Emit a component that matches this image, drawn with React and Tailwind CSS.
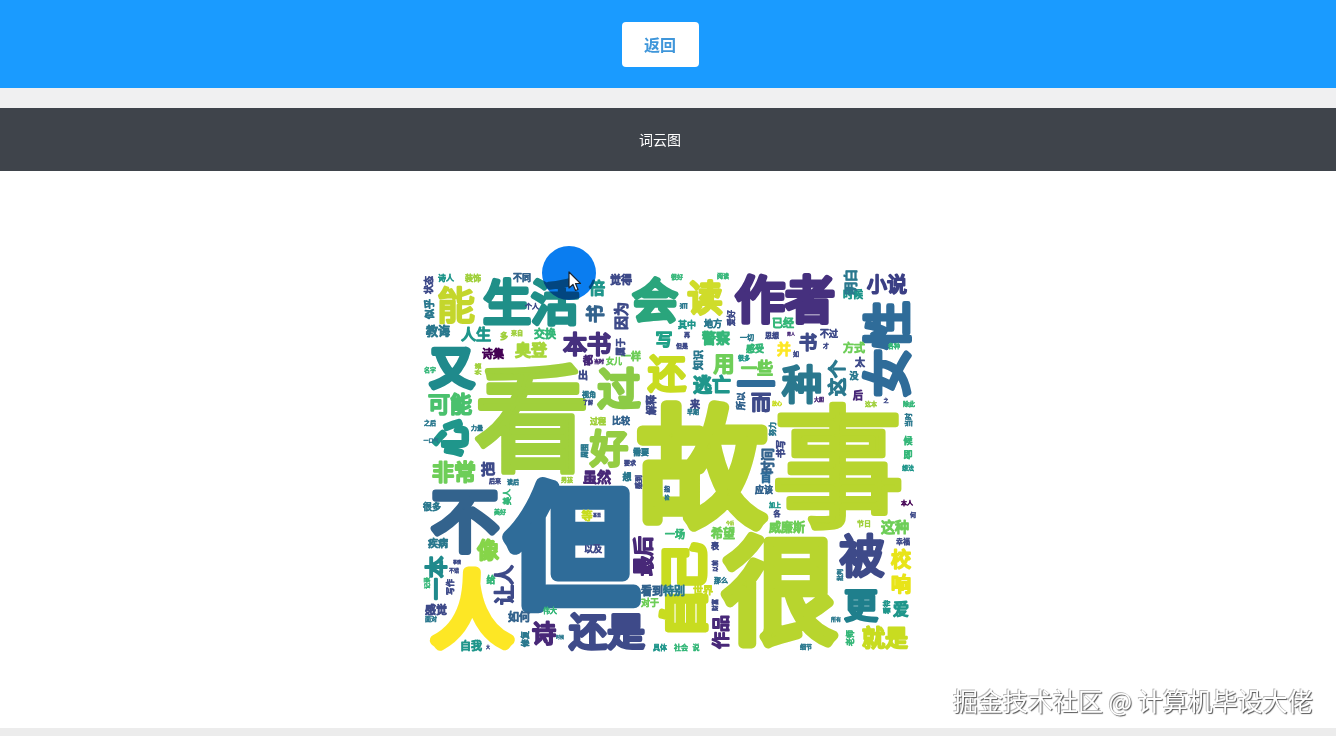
const Y='#fde725',L='#b8d52e',G='#a0d03c',M='#6ece58',E='#35b779',T='#1f968b',C='#1f8a8c',B='#2a788e',S='#2f6c99',I='#3e4a89',P='#482878',D='#440154',K='#c8dc20';
// [text, centre x, centre y, font size, colour, rotated, stroke ratio]
const words=[
['故',702,468,130,L,0,.085],['事',838,468,132,L,0,.05],['看',532,420,116,G,0,.05],['但',572,547,132,S,0,.11],['很',780,592,116,L,0,.08],['不',465,522,68,'#33638d'],['人',472,610,80,Y,0,.14],
['生活',531,303,48,'#1f8f88'],['能',456,305,38,'#c4d62c',0,.07],['会',655,300,46,'#2aa57c'],['读',705,298,35,'#cfdc2a'],['作者',785,300,50,'#46307e'],['小说',887,285,20,'#3b3f85'],['女性',888,349,48,'#2f6c99',1],
['又',452,368,44,C,0,.14],['过',619,390,43,'#8ccb46'],['好',609,448,38,'#95cd42'],['还',667,373,38,K],['一',756,384,38,'#2f6c99'],['种',802,385,40,B,0,.08],['而',761,403,20,I],['一些',757,368,16,M],['逃亡',712,385,19,T],['用',724,363,21,M],
['书',808,343,18,I],['这个',838,378,18,B,1],['并',784,349,14,Y],['方式',854,348,11,M],['太',860,362,10,I],['没',854,376,9,B],['后',858,395,10,P],['已经',783,323,11,E],['不过',829,334,9,I],['时候',853,294,10,T],['明白',850,282,13,B,1],
['其中',687,325,9,T],['地方',713,324,9,B],['警察',716,338,14,E],['写',664,340,17,'#1fa187'],['本书',587,344,24,'#46307e'],['人生',476,335,15,T],['奥登',531,350,16,'#a8d63a'],['诗集',493,354,11,D],['交换',545,334,11,E],['教诲',438,332,12,B],
['可能',450,404,22,'#4ac16d'],['心',451,438,36,'#1f968b',1,.14],['非常',454,472,22,M],['把',488,469,14,I],['虽然',597,477,14,P],['像',488,550,22,'#86d549'],['让人',505,585,20,I,1],['一本',436,578,22,C,1],['还是',607,631,38,I],['诗',544,633,24,P],['如何',519,617,11,'#33638d'],['自我',471,646,11,T],['感觉',436,610,11,I],['很多',432,507,9,B],['疾病',438,543,10,B],
['最后',644,556,20,P,1],['自己',684,590,47,K,1,.13],['更',861,606,34,'#1f7f8c'],['被',862,557,45,I,0,.08],['就是',885,638,23,K],['爱',901,609,16,T],['这种',895,527,14,M],['校',901,560,20,'#e8e419'],['响',901,585,20,'#e8e419'],['希望',723,534,12,M],['威廉斯',787,528,12,M],['一场',675,534,10,E],['特别',674,591,11,B],['世界',703,590,10,K],['作品',721,632,17,P,1],['看到',652,591,11,'#33638d'],['对于',650,603,9,M],
['诗人',446,278,8,T],['装饰',473,278,8,G],['不同',522,278,9,'#33638d'],['觉得',621,280,11,I],['状态',429,285,9,I,1],['似乎',429,309,10,B,1],['倍',597,288,16,T],['书',596,314,18,'#33638d',1],['因为',621,316,14,I,1],['个人',532,306,7,I],['多',504,336,8,G],['来自',517,333,6,G],['都',588,360,10,P],['当时',599,361,5,P],['女儿',614,361,8,M],['一样',631,356,10,M],['属于',621,347,9,I,1],['出',583,375,10,I],['名字',430,370,6,E],['外婆',478,369,6,G,1],['之后',430,423,6,B],['力量',477,428,6,B],['一口气',431,440,5,B],['视角',589,394,7,B],['了解',588,402,5,I],['过程',598,421,8,G],['比较',621,421,9,'#33638d'],['解释',651,405,10,I,1],['需要',641,452,8,B],['周围',584,451,7,B,1],
['很好',677,277,6,E],['阅读',723,276,6,E],['当',683,306,7,B,1],['爱好',731,318,8,I,1],['再',687,335,6,I],['但是',682,346,6,I],['知识',698,360,10,B,1],['一切',747,337,7,B],['思想',772,335,7,I],['感受',755,349,9,E],['很多',744,358,6,T],['男人',791,335,4,P],['如',796,354,6,I],['才',826,346,6,I],['所以',741,401,9,'#33638d',1],['来',695,404,10,I],['早期',693,412,6,B],['放心',777,403,5,K],['大胆',819,399,5,P],['这本',871,404,6,G],['之',886,400,5,I],['除此',909,404,6,E],['各种',894,346,6,E],['当时',908,420,7,B,1],['候',908,441,9,E],['即',908,455,9,E],['想法',908,468,6,T],['时间',767,461,13,'#33638d',1],['首',766,478,11,S],['书写',781,449,9,I,1],['努力',772,429,7,B,1],
['应该',764,490,9,'#33638d'],['加上',775,505,6,T],['各',777,513,7,I],['本人',907,503,6,D],['何',913,515,6,I],['节日',864,523,7,G],['幸福',903,541,7,I],['今后',730,524,4,G],['表',715,546,8,I],['以前',715,566,6,I,1],['那么',721,580,7,B],['财富',715,605,6,I,1],['批判',840,575,6,B,1],['所有',836,619,5,B],['老师',850,638,8,E,1],['看待',886,607,7,T,1],['细节',806,647,6,B],['社会',681,647,7,E],['说',696,647,7,E],['具体',660,647,7,T],['指',667,489,6,'#33638d'],['检',667,497,5,B],
['后来',495,481,6,I],['读后',513,482,6,B],['美人',507,497,8,E,1],['美好',500,512,6,E],['给',491,580,9,E],['事情',457,563,4,I],['不错',454,570,5,I],['写作',450,587,8,I,1],['记录',427,583,6,E,1],['面对',431,619,6,B],['伟大',550,610,7,E],['修复',525,639,8,B,1],['时候',560,638,4,B],['大',488,648,4,I],['男孩',567,480,6,G],['想',627,477,9,B],['感到',638,482,7,I,1],['要求',630,463,6,I],['等',587,516,11,K],['甚至',597,516,4,I],['以及',593,549,9,I],
];
const fs='"Noto Sans CJK SC","Noto Sans",sans-serif';
function Word({w}){
  const [t,x,y,s,c,r,k]=w;
  const px=x-415, py=y-272;
  return <text x={px} y={py+s*0.36} textAnchor="middle" fontSize={s} fontWeight="400" fill={c} stroke={c} strokeWidth={Math.max(s*(k||0.1),0.35)} strokeLinejoin="round" strokeLinecap="round" transform={r?`rotate(-90 ${px} ${py})`:undefined}>{t}</text>;
}
export default function App(){
  return (
    <div className="flex flex-col w-[1336px] h-[736px] overflow-hidden bg-white font-['Noto_Sans_CJK_SC','Noto_Sans',sans-serif]">
      <header className="h-[88px] shrink-0 bg-[#1a9bff] flex items-center justify-center pr-4">
        <button className="w-[77px] h-[45px] bg-white rounded text-base font-bold text-[#3f96da]">返回</button>
      </header>
      <div className="h-5 shrink-0 bg-[#f0f0f1]"></div>
      <div className="h-[63px] shrink-0 bg-[#3f444b] flex items-center justify-center pr-4 pb-[2px] text-sm text-white">词云图</div>
      <main className="flex-1 relative bg-white pt-[101px] pl-[415px]">
        <svg className="blur-[0.4px] overflow-visible" width="500" height="382" style={{fontFamily:fs}}>
          {words.map((w,i)=><Word key={i} w={w}/>)}
        </svg>
        <div className="absolute left-[542px] top-[75px] w-[54px] h-[54px] rounded-full bg-[#0a7df0] mix-blend-multiply"></div>
        <svg className="absolute left-[567px] top-[100px]" width="15" height="22" viewBox="0 0 15 22">
          <path d="M2 1 L2 17 L6 13.5 L8.5 19.5 L11 18.5 L8.5 12.5 L13.5 12.5 Z" fill="#fff" stroke="#1c2530" strokeWidth="1.2" strokeLinejoin="round"/>
        </svg>
        <div className="absolute left-[953px] top-[513px] text-[25px] leading-8 whitespace-nowrap text-white [text-shadow:1px_1px_1px_#555,-1px_-1px_0_#bbb]">掘金技术社区 @ 计算机毕设大佬</div>
      </main>
      <div className="h-2 shrink-0 bg-[#ececec]"></div>
    </div>
  );
}
